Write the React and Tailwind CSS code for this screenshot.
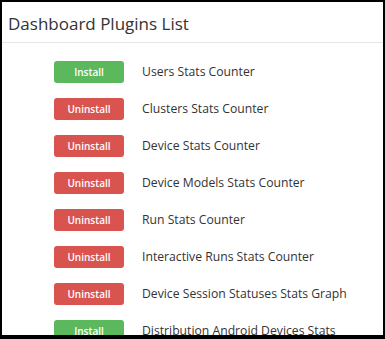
import React from 'react';

const plugins = [
  { name: 'Users Stats Counter', installed: false },
  { name: 'Clusters Stats Counter', installed: true },
  { name: 'Device Stats Counter', installed: true },
  { name: 'Device Models Stats Counter', installed: true },
  { name: 'Run Stats Counter', installed: true },
  { name: 'Interactive Runs Stats Counter', installed: true },
  { name: 'Device Session Statuses Stats Graph', installed: true },
  { name: 'Distribution Android Devices Stats', installed: false },
];

const PluginRow = ({ plugin }) => (
  <div className="flex items-center h-[22px] shrink-0">
    <button
      className={`w-[70px] h-[22px] rounded-[3px] text-white text-[10px] font-semibold leading-none
                 ${plugin.installed ? 'bg-[#d9534f]' : 'bg-[#5cb85c]'}`}
    >
      {plugin.installed ? 'Uninstall' : 'Install'}
    </button>
    <span className="ml-[18px] text-[12.2px] text-[#333333] whitespace-nowrap">{plugin.name}</span>
  </div>
);

export default function App() {
  return (
    <div
      className="w-[385px] h-[339px] bg-white border-t-2 border-l-2 border-r-2 border-b-[4px] border-black overflow-hidden flex flex-col"
      style={{ fontFamily: '"Open Sans", "Liberation Sans", sans-serif' }}
    >
      <div className="h-[41px] shrink-0 border-b border-[#e5e5e5] flex items-center pl-[6px] pt-[2px]">
        <h2 className="text-[17px] text-[#333333] leading-none">Dashboard Plugins List</h2>
      </div>
      <div className="flex flex-col gap-[15px] pt-[18px] pl-[52px]">
        {plugins.map((p, i) => (
          <PluginRow key={i} plugin={p} />
        ))}
      </div>
    </div>
  );
}
